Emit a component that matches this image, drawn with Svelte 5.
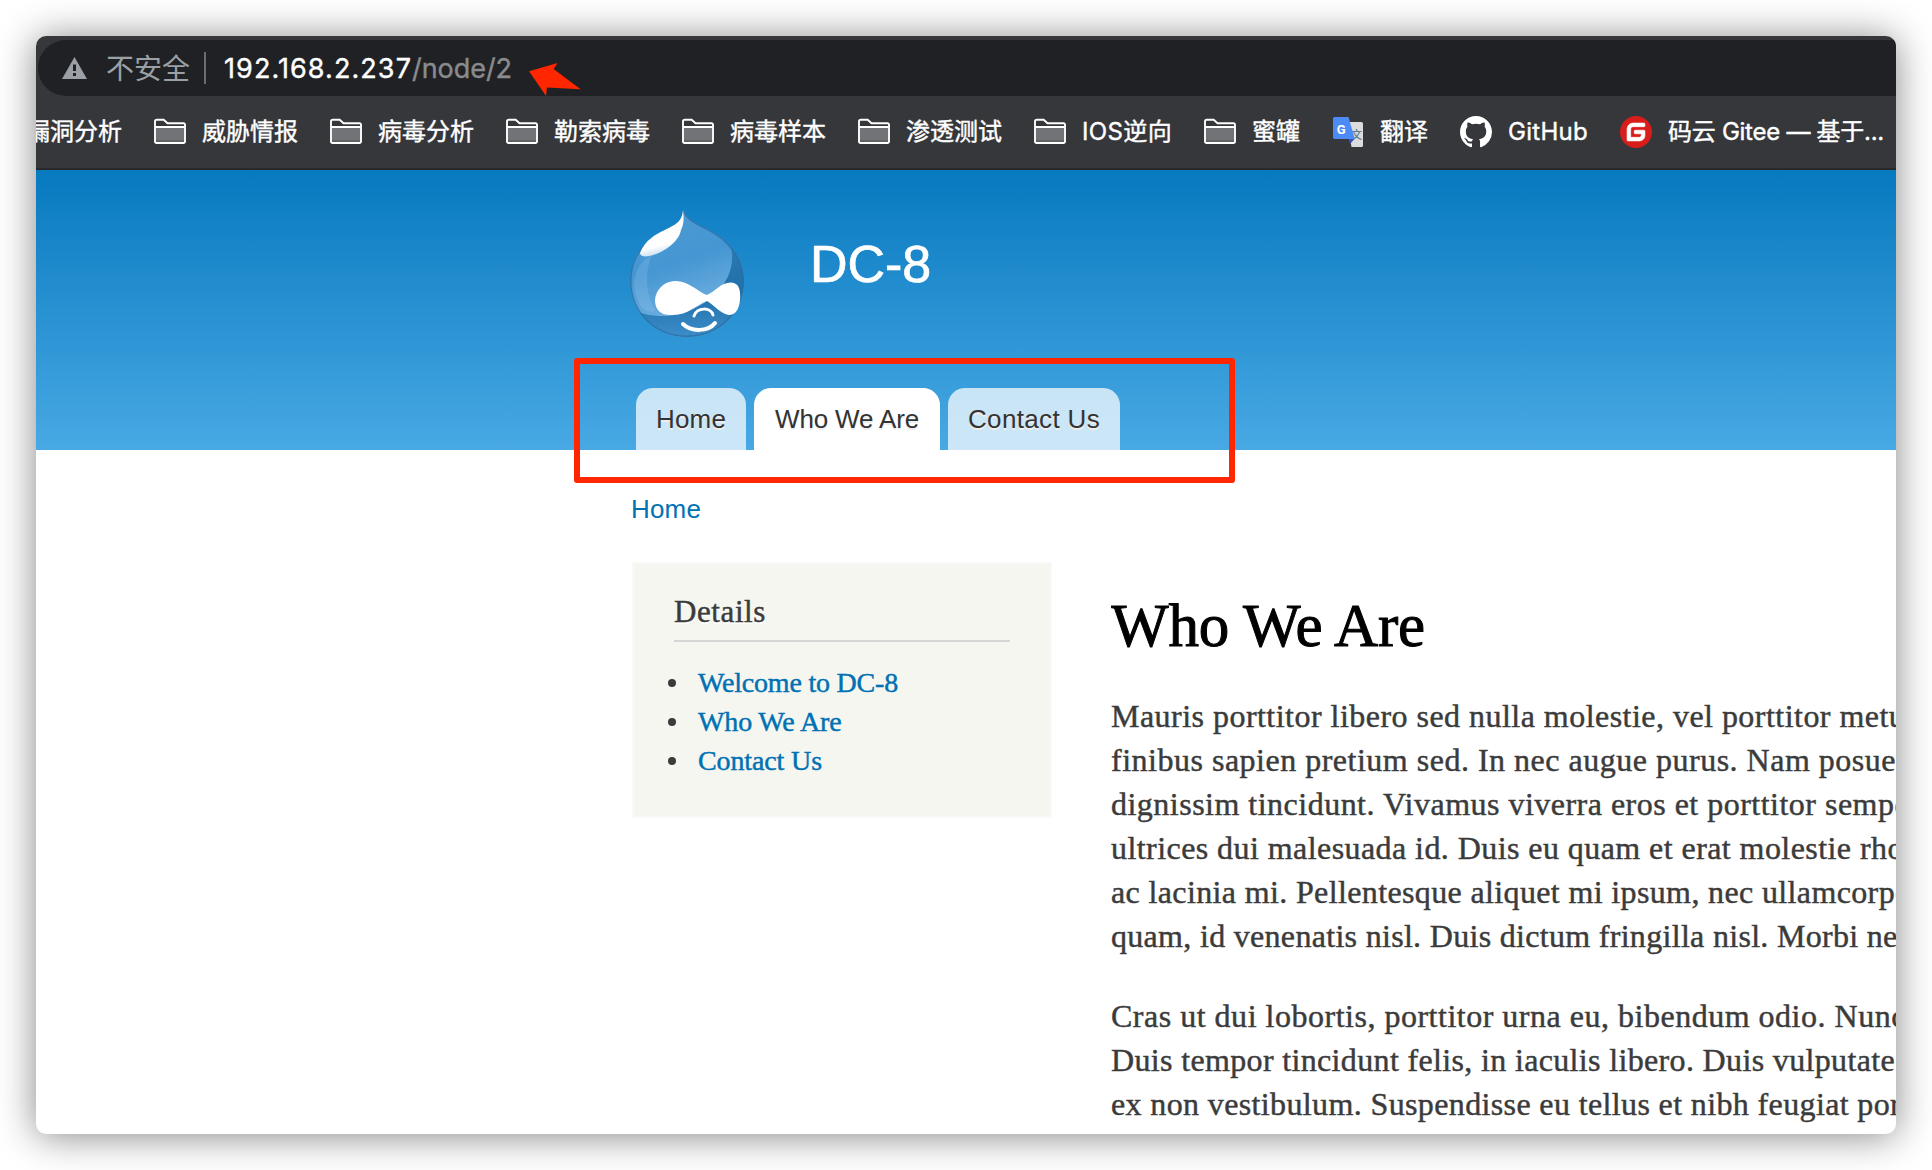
<script>
  const folders = [
    { label: '威胁情报', width: 96 },
    { label: '病毒分析', width: 96 },
    { label: '勒索病毒', width: 96 },
    { label: '病毒样本', width: 96 },
    { label: '渗透测试', width: 96 },
    { label: 'IOS逆向', width: 90 },
    { label: '蜜罐', width: 48 }
  ];

  const tabs = [
    { label: 'Home', text: 70, size: 'small' },
    { label: 'Who We Are', text: 144, size: 'large', active: true },
    { label: 'Contact Us', text: 132, size: 'medium' }
  ];

  const links = [
    { label: 'Welcome to DC-8', width: 200 },
    { label: 'Who We Are', width: 143.5 },
    { label: 'Contact Us', width: 124 }
  ];

  // head is set to the given width, tail runs on past the window edge
  const paragraphs = [
    [
      { head: 'Mauris porttitor libero sed nulla molestie, vel porttitor', width: 720, tail: ' metus' },
      { head: 'finibus sapien pretium sed. In nec augue purus. Nam posue', width: 785, tail: 're' },
      { head: 'dignissim tincidunt. Vivamus viverra eros et porttitor', width: 705.5, tail: ' semper' },
      { head: 'ultrices dui malesuada id. Duis eu quam et erat molestie', width: 740.5, tail: ' rhoncus' },
      { head: 'ac lacinia mi. Pellentesque aliquet mi ipsum, nec ullamcorp', width: 784, tail: 'er' },
      { head: 'quam, id venenatis nisl. Duis dictum fringilla nisl. Morbi', width: 747.5, tail: ' nec' }
    ],
    [
      { head: 'Cras ut dui lobortis, porttitor urna eu, bibendum odio.', width: 715, tail: ' Nunc' },
      { head: 'Duis tempor tincidunt felis, in iaculis libero. Duis vulputate', width: 784, tail: '' },
      { head: 'ex non vestibulum. Suspendisse eu tellus et nibh feugiat', width: 738, tail: ' porta' }
    ]
  ];

  // Tracks the text of a line so that its first span has the wanted width.
  function fit(node, width) {
    const head = node.firstElementChild ?? node;
    const range = document.createRange();
    range.selectNodeContents(head);
    const natural = range.getBoundingClientRect().width;
    const count = head.textContent.length;
    node.style.letterSpacing = `${(width - natural) / count}px`;
  }
</script>

<main class="window">
  <div class="toolbar">
    <div class="address">
      <svg class="warn" viewBox="0 0 25 22"><path d="M12.5 0 25 22H0z" fill="#9aa0a6" /><path d="M11 7.500h3v6.500h-3zM11 16h3v3h-3z" fill="#202124" /></svg>
      <span class="insecure">不安全</span>
      <span class="divider"></span>
      <span class="url host" use:fit={188}>192.168.2.237</span><span class="url path" use:fit={100}>/node/2</span>
    </div>
  </div>

  <nav class="bookmarks">
    <span class="mark cut">漏洞分析</span>
    {#each folders as f}
      <span class="mark">
        <svg class="icon" viewBox="0 0 32 32">
          <path d="M2 11.500h28V27H2z" fill="#727376" />
          <path d="M2 24h28v3H2z" fill="#616265" />
          <path d="M1 11h30M1 5.200A1.500 1.500 0 0 1 2.500 3.700h7.200l3.800 3.500h16A1.500 1.500 0 0 1 31 8.700v16.800a1.500 1.500 0 0 1-1.500 1.500h-27A1.500 1.500 0 0 1 1 25.500z" fill="none" stroke="#fff" stroke-width="1.900" />
        </svg>
        <span use:fit={f.width}>{f.label}</span>
      </span>
    {/each}
    <span class="mark">
      <svg class="icon" viewBox="0 0 32 32">
        <path d="M15 6h14.500A1.600 1.600 0 0 1 31 7.600v21.800a1.600 1.600 0 0 1-1.500 1.600H19.500z" fill="#dcdcdc" />
        <text x="19" y="22.500" font-size="11" class="han">文</text>
        <path d="M16.500 22.700h6.200L18 28z" fill="#3a4fc0" />
        <path d="M2.500 1h14l6.300 22H2.500A1.600 1.600 0 0 1 1 21.500v-19A1.600 1.600 0 0 1 2.500 1z" fill="#4c8bf5" />
        <text x="4.800" y="17.700" font-size="13" class="gee">G</text>
      </svg>
      <span>翻译</span>
    </span>
    <span class="mark">
      <svg class="icon" viewBox="0 0 16 16"><path fill="#fff" d="M8 0C3.580 0 0 3.580 0 8c0 3.540 2.290 6.530 5.470 7.590.4.070.55-.17.55-.38 0-.19-.01-.82-.01-1.490-2.010.37-2.530-.49-2.690-.94-.09-.23-.48-.94-.82-1.130-.28-.15-.68-.52-.01-.53.63-.01 1.080.58 1.230.82.72 1.210 1.870.87 2.330.66.070-.52.28-.87.51-1.070-1.780-.2-3.640-.89-3.640-3.950 0-.87.31-1.590.82-2.150-.08-.2-.36-1.020.08-2.120 0 0 .67-.21 2.200.82.64-.18 1.320-.27 2-.27s1.360.09 2 .27c1.530-1.040 2.200-.82 2.200-.82.44 1.100.16 1.920.08 2.120.51.56.82 1.270.82 2.150 0 3.070-1.870 3.750-3.650 3.950.29.25.54.73.54 1.480 0 1.070-.01 1.930-.01 2.200 0 .21.15.46.55.38A8.010 8.010 0 0 0 16 8c0-4.420-3.580-8-8-8z" /></svg>
      <span use:fit={80}>GitHub</span>
    </span>
    <span class="mark">
      <svg class="icon" viewBox="0 0 24 24">
        <circle cx="12" cy="12" r="12" fill="#d81e1a" />
        <path fill="#fff" stroke="#fff" stroke-width="0.500" d="M18.070 5.330c.33 0 .59.27.59.6v1.480a.59.59 0 0 1-.59.590H9.780C8.800 8 8 8.800 8 9.780v5.630c0 .33.27.590.590.590h5.630c.98 0 1.780-.8 1.780-1.780v-.3a.59.590 0 0 0-.590-.590h-4.150a.59.590 0 0 1-.590-.590v-1.480a.59.590 0 0 1 .590-.590h6.810c.33 0 .6.260.6.590v3.400a4 4 0 0 1-4 4H5.930a.59.590 0 0 1-.6-.590V9.780a4.440 4.440 0 0 1 4.450-4.450z" />
      </svg>
      <span use:fit={216}>码云 Gitee — 基于...</span>
    </span>
  </nav>

  <header class="banner">
    <div class="brand">
      <svg class="drop" viewBox="0 0 114 129">
        <defs>
          <linearGradient id="body" x1="0" y1="0" x2="0.300" y2="1">
            <stop offset="0" stop-color="#4f9bd2" />
            <stop offset="0.500" stop-color="#4596d2" />
            <stop offset="1" stop-color="#79b5e2" />
          </linearGradient>
          <linearGradient id="shade" x1="0" y1="0" x2="0" y2="1">
            <stop offset="0" stop-color="#2c7ab3" />
            <stop offset="0.500" stop-color="#1f6fa9" />
            <stop offset="1" stop-color="#3d8fcb" />
          </linearGradient>
          <linearGradient id="gloss" x1="0.400" y1="0" x2="0.600" y2="1">
            <stop offset="0.750" stop-color="#fff" />
            <stop offset="1" stop-color="#fff" stop-opacity="0.600" />
          </linearGradient>
          <clipPath id="outline"><path d="M53 1C57 11 66 15 78 21C96 30 114 48 114 73C114 106 88 129 57 129C25 129 0 105 0 73C0 51 12 35 29 25C42 17 53 15 53 1Z" /></clipPath>
        </defs>
        <g clip-path="url(#outline)">
          <path d="M0 0H114V129H0z" fill="url(#body)" />
          <path d="M101 38C107 67 88 90 63 101C40 112 18 108 5 103L18 132H118V38z" fill="url(#shade)" />
          <path d="M4 74C6 60 12 52 22 47C14 66 16 88 26 103C12 108 3 88 4 74Z" fill="#a4cff0" opacity="0.220" />
          <path d="M53 1C57 11 66 15 78 21C96 30 114 48 114 73C114 106 88 129 57 129C25 129 0 105 0 73C0 51 12 35 29 25C42 17 53 15 53 1Z" fill="none" stroke="#2a6fa5" stroke-width="3" opacity="0.800" />
        </g>
        <path d="M53 2C54 9 54 16 51 22C49 34 32 46 19 48C14 49 10 48 10 45C15 32 26 26 35 22C44 17 52 15 53 2Z" fill="url(#gloss)" />
        <path d="M44 73C58 72 68 84 77 87C86 83 90 75 101 74.500C109 75 111 82 110 92C109 102 105 107 99 107C91 106 84 97 77 93C66 97 58 107 43 107C30 108 25 101 25 92C26 81 34 74 44 73Z" fill="#fff" />
        <path d="M64 108C67 99 81 99 83 107" fill="none" stroke="#fff" stroke-width="3" stroke-linecap="round" />
        <path d="M53 116C61 124 78 124 85 115" fill="none" stroke="#fff" stroke-width="4" stroke-linecap="round" />
      </svg>
      <span class="site" use:fit={121}>DC-8</span>
    </div>
    <nav class="tabs">
      {#each tabs as t}
        <span class="tab {t.size}" class:active={t.active}><span use:fit={t.text}>{t.label}</span></span>
      {/each}
    </nav>
  </header>

  <div class="crumb"><span use:fit={70}>Home</span></div>

  <div class="columns">
    <aside class="details">
      <h2><span use:fit={92}>Details</span></h2>
      <ul>
        {#each links as l}
          <li><span use:fit={l.width}>{l.label}</span></li>
        {/each}
      </ul>
    </aside>
    <article>
      <h1><span use:fit={314}>Who We Are</span></h1>
      {#each paragraphs as lines}
        <div class="para">
          {#each lines as line}
            <div class="line" use:fit={line.width}><span>{line.head}</span>{line.tail}</div>
          {/each}
        </div>
      {/each}
    </article>
  </div>
</main>

<svg class="arrow" viewBox="0 0 52 33"><path d="M0 8.300 28.600 0 24.600 6 51.600 26.300 17.900 24.600 17.100 33z" fill="#ff2600" /></svg>
<div class="marker"></div>

<style>
  :global(body) {
    background: #fff;
    overflow: hidden;
  }
  .window {
    width: 1860px;
    height: 1098px;
    margin: 36px;
    border-radius: 10px;
    overflow: hidden;
    background: #fff;
    box-shadow: 0 2px 38px rgba(0, 0, 0, 0.48);
    box-sizing: border-box;
    color: #3b3b3b;
    white-space: nowrap;
  }
  .toolbar {
    background: #36373b;
    padding: 4px 0 0 2px;
  }
  .address {
    display: flex;
    align-items: center;
    height: 56px;
    padding-left: 24px;
    border-radius: 28px 0 0 28px;
    background: #202124;
    font: 27px/56px Inter, 'Noto Sans CJK SC', sans-serif;
  }
  .warn {
    width: 25px;
    height: 22px;
    margin-right: 19px;
  }
  .insecure {
    color: #9aa0a6;
    font: 28px/54px 'Noto Sans CJK SC', sans-serif;
    height: 56px;
    width: 84px;
  }
  .divider {
    width: 2px;
    height: 32px;
    margin: 0 18px 0 14px;
    background: #6b6d70;
  }
  .url {
    padding-top: 1px;
    -webkit-text-stroke: 0.4px currentColor;
  }
  .host {
    color: #fff;
  }
  .path {
    color: #8a8b8d;
  }
  .bookmarks {
    display: flex;
    align-items: center;
    gap: 32px;
    height: 72px;
    background: #36373b;
    border-bottom: 2px solid #28292b;
    color: #fff;
    font: 24px/72px Inter, 'Noto Sans CJK SC', sans-serif;
    -webkit-text-stroke: 0.4px currentColor;
  }
  .mark {
    display: flex;
    align-items: center;
    gap: 16px;
    flex: none;
  }
  .cut {
    margin-left: -10px;
  }
  .icon {
    width: 32px;
    height: 32px;
    flex: none;
    -webkit-text-stroke: 0;
  }
  .han {
    font-family: 'Noto Sans CJK SC', sans-serif;
    font-weight: 500;
    fill: #607d8b;
  }
  .gee {
    font-family: Roboto, sans-serif;
    font-weight: 700;
    fill: #fff;
  }
  .banner {
    display: flex;
    flex-direction: column;
    justify-content: space-between;
    height: 280px;
    background: linear-gradient(#0779bf, #48a9e4);
  }
  .brand {
    display: flex;
    align-items: flex-start;
    gap: 66px;
    padding: 38px 0 0 594px;
  }
  .drop {
    width: 114px;
    height: 129px;
  }
  .site {
    margin-top: 26px;
    color: #fff;
    font: 52px/60px 'Liberation Sans', Arial, sans-serif;
    -webkit-text-stroke: 0.7px currentColor;
  }
  .tabs {
    display: flex;
    gap: 8px;
    padding-left: 600px;
  }
  .tab {
    height: 62px;
    box-sizing: border-box;
    padding-left: 20px;
    border-radius: 17px 17px 0 0;
    background: rgba(255, 255, 255, 0.72);
    color: #333;
    font: 26px/62px 'Liberation Sans', Arial, sans-serif;
    text-shadow: 0 2px 0 #eee;
  }
  .small {
    width: 110px;
  }
  .large {
    width: 186px;
    padding-left: 21px;
  }
  .medium {
    width: 172px;
  }
  .active {
    background: #fff;
  }
  .crumb {
    padding: 39px 0 0 595px;
    color: #0071b3;
    font: 26px/40px 'Liberation Sans', Arial, sans-serif;
  }
  .columns {
    display: flex;
    align-items: flex-start;
    gap: 59px;
    padding: 33px 0 0 596px;
    font-family: 'Liberation Serif', Georgia, serif;
    -webkit-text-stroke: 0.45px currentColor;
  }
  .details {
    flex: none;
    box-sizing: border-box;
    width: 420px;
    height: 256px;
    padding: 29px 40px 0;
    border: 2px solid #f9f9f9;
    background: #f6f6f0;
  }
  h2 {
    margin: 0 0 21px;
    height: 47px;
    border-bottom: 2px solid #d6d6d6;
    font-size: 31px;
    font-weight: 400;
    line-height: 38px;
    text-shadow: 0 2px 0 #fff;
  }
  ul {
    margin: 0;
    padding: 0;
    list-style: none;
  }
  li {
    display: flex;
    align-items: center;
    height: 39px;
    margin-left: -6px;
    color: #0071b3;
    font-size: 28px;
    line-height: 39px;
  }
  li::before {
    content: '';
    width: 8px;
    height: 8px;
    margin-right: 22px;
    border-radius: 50%;
    background: #3b3b3b;
  }
  article {
    flex: none;
    width: 785px;
    padding-top: 24px;
    overflow: hidden;
  }
  h1 {
    margin: 0 0 28px;
    color: #000;
    font-size: 61px;
    font-weight: 400;
    line-height: 80px;
    -webkit-text-stroke: 1px currentColor;
  }
  .para {
    margin-bottom: 36px;
    font-size: 32px;
    line-height: 44px;
  }
  .line {
    height: 44px;
  }
  .arrow {
    position: absolute;
    left: 529px;
    top: 62.500px;
    width: 52px;
    height: 33px;
  }
  .marker {
    position: absolute;
    left: 574px;
    top: 358px;
    width: 661px;
    height: 125px;
    box-sizing: border-box;
    border: 6px solid #ff2600;
    border-radius: 3px;
  }
</style>
